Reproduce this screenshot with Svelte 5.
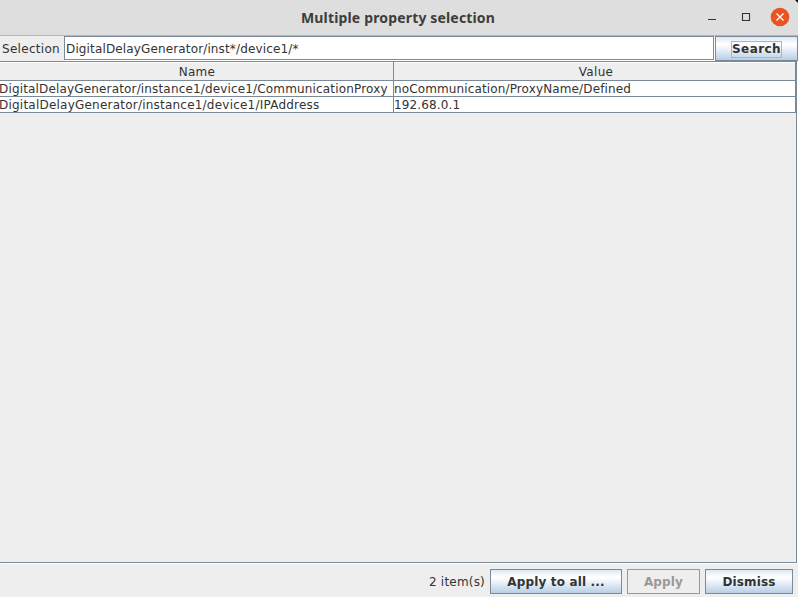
<script>
  let selection = $state('DigitalDelayGenerator/inst*/device1/*');
  const rows = [
    { name: 'DigitalDelayGenerator/instance1/device1/CommunicationProxy', value: 'noCommunication/ProxyName/Defined' },
    { name: 'DigitalDelayGenerator/instance1/device1/IPAddress', value: '192.68.0.1' }
  ];
</script>

<div class="window">
  <header class="titlebar">
    <h1>Multiple property selection</h1>
    <div class="controls">
      <svg width="10" height="20" viewBox="0 0 10 20" aria-label="Minimize"><path d="M1 12.5h8" stroke="#333" fill="none" /></svg>
      <svg width="10" height="20" viewBox="0 0 10 20" aria-label="Maximize"><path d="M1.5 6.5h7v7h-7z" stroke="#333" stroke-width="1.1" fill="none" /></svg>
      <svg class="close" width="20" height="20" viewBox="0 0 20 20" aria-label="Close"><circle cx="10" cy="10" r="9.3" fill="#e95420" /><path d="M6.5 6.5l7 7m0-7l-7 7" stroke="#fff" stroke-width="1.3" fill="none" /></svg>
    </div>
    <svg class="corner" width="3" height="3" viewBox="0 0 3 3"><path d="M0 0h3v3z" fill="#111" /></svg>
  </header>

  <div class="search">
    <label for="selection">Selection</label>
    <input id="selection" type="text" spellcheck="false" bind:value={selection} />
    <button class="find"><span>Search</span></button>
  </div>

  <main class="pane">
    <div class="table">
      <div class="row head"><div>Name</div><div>Value</div></div>
      {#each rows as row}
        <div class="row"><div class="name">{row.name}</div><div class="value">{row.value}</div></div>
      {/each}
    </div>
  </main>

  <footer>
    <span class="count">2 item(s)</span>
    <button class="all">Apply to all ...</button>
    <button class="apply" disabled>Apply</button>
    <button class="dismiss">Dismiss</button>
  </footer>
</div>

<style>
  .window {
    width: 798px;
    height: 597px;
    box-sizing: border-box;
    display: flex;
    flex-direction: column;
    overflow: hidden;
    background: #eee;
    color: #333;
    font: 12px/15px "DejaVu Sans", sans-serif;
    letter-spacing: 0.16px;
  }
  .titlebar {
    position: relative;
    height: 36px;
    box-sizing: border-box;
    flex: none;
    display: grid;
    grid-template-columns: 1fr auto 1fr;
    align-items: center;
    background: #dedede;
    border-bottom: 1px solid #b5b5b5;
  }
  h1 {
    grid-column: 2;
    margin: 0 2px 0 0;
    font: bold 14px/20px "Noto Sans", sans-serif;
    letter-spacing: 0.16px;
    color: #3d3d3d;
  }
  .controls {
    display: flex;
    justify-content: flex-end;
    align-items: center;
    gap: 24px;
    padding: 0 8px 2px 0;
  }
  .controls .close { margin-left: -5px; }
  .corner { position: absolute; right: 0; top: 0; }
  .search {
    display: flex;
    height: 25px;
    flex: none;
  }
  label {
    width: 62px;
    padding: 6px 0 0 2px;
    box-sizing: border-box;
    margin-right: 2px;
    letter-spacing: 0.3px;
  }
  input {
    flex: 1;
    min-width: 0;
    height: 24px;
    box-sizing: border-box;
    margin: 0 1px 0 0;
    padding: 2px 1px 0;
    border: 1px solid #7a8a99;
    border-radius: 0;
    box-shadow: 1px 1px #fff;
    background: #fff;
    color: #333;
    font: inherit;
    letter-spacing: 0.14px;
    outline: 0;
  }
  button {
    box-sizing: border-box;
    height: 25px;
    padding: 1px 0 0;
    border: 1px solid #7a8a99;
    border-radius: 0;
    background: linear-gradient(#dde8f3, #fff 30%, #fff 34%, #dde8f3 66%, #b8cfe5);
    color: #333;
    font: bold 12px/15px "DejaVu Sans", sans-serif;
    letter-spacing: 0.15px;
  }
  .find {
    width: 83px;
    letter-spacing: 0.4px;
  }
  .find span {
    display: inline-block;
    outline: 1px solid #a3b8cc;
  }
  .pane {
    flex: 1;
    box-sizing: border-box;
    width: 797px;
    border: solid #7a8a99;
    border-width: 1px 1px 1px 0;
    box-shadow: 1px 1px #fff;
  }
  .table { width: 796px; }
  .row {
    display: grid;
    grid-template-columns: 394px 402px;
    height: 16px;
  }
  .row > div {
    box-sizing: border-box;
    padding-top: 1px;
    line-height: 14px;
    border: solid #7a8a99;
    border-width: 0 1px 1px 0;
    background: #fff;
    white-space: nowrap;
    overflow: hidden;
  }
  .row:last-child .name { letter-spacing: 0.22px; }
  .row .value { letter-spacing: 0.13px; }
  .row.head { height: 19px; }
  .row.head > div {
    padding-top: 3px;
    text-align: center;
    background: #eee;
    box-shadow: inset 0 1px #fff;
    letter-spacing: 0.3px;
  }
  .row.head > div:first-child { padding-left: 1px; }
  .row.head > div:last-child { padding-left: 3px; }
  .name { text-indent: -1px; }
  footer {
    display: flex;
    flex: none;
    height: 34px;
    box-sizing: border-box;
    padding: 6px 5px 0 0;
    justify-content: flex-end;
    gap: 5px;
  }
  .count {
    padding-top: 6px;
    letter-spacing: 0.2px;
  }
  .all { width: 132px; }
  .apply {
    width: 73px;
    background: #eee;
    border-color: #999;
    color: #999;
  }
  .dismiss { width: 88px; }
</style>
